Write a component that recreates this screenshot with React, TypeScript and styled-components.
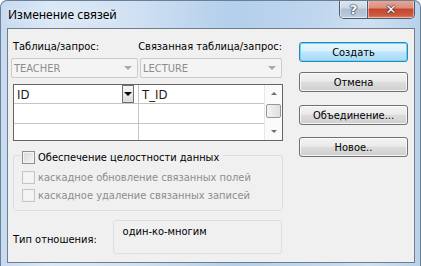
import React from 'react';
import styled, { createGlobalStyle } from 'styled-components';

const GlobalStyle = createGlobalStyle`
  html, body { margin: 0; padding: 0; background: #ffffff; }
  body { font-family: "DejaVu Sans Condensed", "DejaVu Sans", sans-serif; font-size: 11px; }
`;

// Окно в стиле Windows 7 Aero
const Window = styled.div`
  width: 421px;
  height: 266px;
  box-sizing: border-box;
  display: flex;
  flex-direction: column;
  border: 1px solid #6b7f96;
  border-bottom: none;
  border-radius: 7px 7px 0 0;
  background: linear-gradient(90deg, #c6daf0 0%, #dbe8f6 12%, #d2e2f3 30%, #b3cfeb 55%, #bfd6ee 75%, #cfe0f2 88%, #b8d1eb 100%);
  overflow: hidden;
`;

const TitleBar = styled.div`
  height: 27px;
  display: flex;
  justify-content: space-between;
  align-items: flex-start;
  padding-left: 7px;
`;

const TitleText = styled.div`
  font-family: "Noto Sans", "Open Sans", sans-serif;
  font-size: 12px;
  color: #000;
  line-height: 28px;
  text-shadow: 0 0 8px rgba(255, 255, 255, 0.9);
`;

const CaptionButtons = styled.div`
  display: flex;
  margin-right: 5px;
  margin-top: -1px;
  border: 1px solid #4d5b6d;
  border-top: none;
  border-radius: 0 0 5px 5px;
  overflow: hidden;
`;

const CaptionButton = styled.div<{ $close?: boolean }>`
  width: ${p => (p.$close ? 46 : 27)}px;
  height: 18px;
  display: flex;
  align-items: center;
  justify-content: center;
  font-family: "DejaVu Sans", sans-serif;
  font-weight: bold;
  font-size: 13px;
  color: #ffffff;
  text-shadow: 0 0 1px #1c2a3a, 0 0 1px #1c2a3a, 0 0 2px #2a3a4a;
  box-shadow: inset 0 0 0 1px rgba(255, 255, 255, 0.45);
  background: ${p =>
    p.$close
      ? 'linear-gradient(#e9a99b 0%, #dc8d7b 45%, #c7432d 50%, #cc5a3f 85%, #e0876a 100%)'
      : 'linear-gradient(#dfe8f2 0%, #cbd7e5 45%, #aebfd3 50%, #b6c7da 85%, #c8d7e6 100%)'};
  & + & { border-left: 1px solid #4d5b6d; }
`;

const Client = styled.div`
  margin: 0 5px 0 6px;
  height: 235px;
  box-sizing: border-box;
  border: 1px solid #737d89;
  background: #f0f0f0;
  display: flex;
  padding: 0 0 0 3px;
  gap: 17px;
`;

const LeftColumn = styled.div`
  width: 271px;
  display: flex;
  flex-direction: column;
`;

const RightColumn = styled.div`
  display: flex;
  flex-direction: column;
  padding-top: 13px;
`;

const LabelsRow = styled.div`
  display: flex;
  margin-top: 10px;
  height: 14px;
  align-items: center;
`;

const Label = styled.div<{ $w?: number }>`
  width: ${p => (p.$w ? `${p.$w}px` : 'auto')};
  padding-left: 2px;
  box-sizing: border-box;
  color: #000;
  white-space: nowrap;
`;

const ComboRow = styled.div`
  display: flex;
  gap: 2px;
  margin-top: 5px;
`;

const Combo = styled.div<{ $w: number }>`
  width: ${p => p.$w}px;
  height: 20px;
  box-sizing: border-box;
  border: 1px solid #cbcbcb;
  border-radius: 2px;
  background: #f4f4f4;
  display: flex;
  align-items: center;
  justify-content: space-between;
  padding: 0 5px 0 2px;
  color: #8d8d8d;
`;

const Arrow = styled.span<{ $color: string; $size: number; $up?: boolean }>`
  width: 0;
  height: 0;
  border-left: ${p => p.$size}px solid transparent;
  border-right: ${p => p.$size}px solid transparent;
  ${p => (p.$up ? 'border-bottom' : 'border-top')}: ${p => Math.ceil(p.$size * 0.8)}px solid ${p => p.$color};
`;

const Grid = styled.div`
  margin: 6px 0 0 2px;
  width: 270px;
  height: 57px;
  box-sizing: border-box;
  border: 1px solid #646464;
  background: #ffffff;
  display: flex;
`;

const Cells = styled.div`
  flex: 1;
  display: flex;
  flex-direction: column;
`;

const GridRow = styled.div<{ $h: number; $last?: boolean }>`
  height: ${p => p.$h}px;
  display: flex;
  border-bottom: ${p => (p.$last ? 'none' : '1px solid #c4c4c4')};
`;

const Cell = styled.div<{ $w?: number }>`
  ${p => (p.$w ? `width: ${p.$w}px; border-right: 1px solid #c4c4c4;` : 'flex: 1;')}
  box-sizing: border-box;
  display: flex;
  align-items: center;
  justify-content: space-between;
  padding-left: 3px;
  padding-right: 4px;
  font-size: 13px;
  color: #1d1a14;
`;

const DropButton = styled.div`
  width: 12px;
  height: 18px;
  box-sizing: border-box;
  border: 1px solid #707070;
  background: linear-gradient(#f6f6f6, #dcdcdc);
  display: flex;
  align-items: center;
  justify-content: center;
`;

const ScrollBar = styled.div`
  width: 17px;
  background: #fafafa;
  border-left: 1px solid #e6e6e6;
  display: flex;
  flex-direction: column;
  align-items: center;
`;

const ScrollArrow = styled.div`
  height: 17px;
  width: 100%;
  display: flex;
  align-items: center;
  justify-content: center;
`;

const ScrollTrack = styled.div`
  flex: 1;
`;

const Thumb = styled.div`
  width: 15px;
  height: 14px;
  box-sizing: border-box;
  border: 1px solid #979797;
  border-radius: 2px;
  background: linear-gradient(90deg, #f2f2f2, #e0e0e0);
  margin-top: 2px;
`;

const Group = styled.div`
  margin: 14px 0 0 2px;
  width: 270px;
  height: 56px;
  box-sizing: border-box;
  border: 1px solid #d5dfe5;
  border-radius: 3px;
  padding-left: 7px;
  display: flex;
  flex-direction: column;
  align-items: flex-start;
`;

const CheckRow = styled.div<{ $top: number }>`
  display: flex;
  align-items: center;
  gap: 3px;
  height: 13px;
  margin-top: ${p => p.$top}px;
  padding: 0 4px 0 1px;
  background: #f0f0f0;
`;

const CheckBox = styled.span<{ $disabled?: boolean }>`
  width: 13px;
  height: 13px;
  box-sizing: border-box;
  border: 1px solid ${p => (p.$disabled ? '#c6c6c6' : '#8e8f8f')};
  background: ${p => (p.$disabled ? '#f4f4f4' : 'linear-gradient(135deg, #d8d8d8, #f6f6f6)')};
  box-shadow: inset 0 0 0 1px ${p => (p.$disabled ? '#f0f0f0' : '#f4f4f4')};
`;

const CheckText = styled.span<{ $disabled?: boolean }>`
  color: ${p => (p.$disabled ? '#8d8d8d' : '#000')};
  white-space: nowrap;
`;

const RelationRow = styled.div`
  display: flex;
  align-items: center;
  margin: 9px 0 0 2px;
`;

const RelationLabel = styled.div`
  width: 100px;
  padding-top: 4px;
`;

const RelationBox = styled.div`
  width: 170px;
  height: 34px;
  box-sizing: border-box;
  border: 1px solid #d9dfe3;
  border-radius: 3px;
  padding: 4px 0 0 9px;
  line-height: 14px;
`;

const Button = styled.button<{ $default?: boolean; $top: number }>`
  width: 109px;
  height: 20px;
  margin-top: ${p => p.$top}px;
  padding: 0;
  box-sizing: border-box;
  font-family: inherit;
  font-size: 11px;
  color: #000;
  border: 1px solid ${p => (p.$default ? '#3c7fb1' : '#707070')};
  border-radius: 3px;
  background: ${p =>
    p.$default
      ? 'linear-gradient(#eaf6fd 0%, #d9f0fc 45%, #bee6fd 50%, #a7d9f5 100%)'
      : 'linear-gradient(#f2f2f2 0%, #ebebeb 45%, #dddddd 50%, #cfcfcf 100%)'};
  box-shadow: inset 0 0 0 1px ${p => (p.$default ? '#5fdcfb' : 'rgba(255,255,255,0.75)')};
`;

const App: React.FC = () => {
  return (
    <>
      <GlobalStyle />
      <Window>
        <TitleBar>
          <TitleText>Изменение связей</TitleText>
          <CaptionButtons>
            <CaptionButton>?</CaptionButton>
            <CaptionButton $close>✕</CaptionButton>
          </CaptionButtons>
        </TitleBar>
        <Client>
          <LeftColumn>
            <LabelsRow>
              <Label $w={129}>Таблица/запрос:</Label>
              <Label>Связанная таблица/запрос:</Label>
            </LabelsRow>
            <ComboRow>
              <Combo $w={127}>
                TEACHER
                <Arrow $color="#a8a8a8" $size={4} />
              </Combo>
              <Combo $w={142}>
                LECTURE
                <Arrow $color="#a8a8a8" $size={4} />
              </Combo>
            </ComboRow>
            <Grid>
              <Cells>
                <GridRow $h={19}>
                  <Cell $w={125}>
                    ID
                    <DropButton>
                      <Arrow $color="#000" $size={4} />
                    </DropButton>
                  </Cell>
                  <Cell>T_ID</Cell>
                </GridRow>
                <GridRow $h={19}>
                  <Cell $w={125} />
                  <Cell />
                </GridRow>
                <GridRow $h={17} $last>
                  <Cell $w={125} />
                  <Cell />
                </GridRow>
              </Cells>
              <ScrollBar>
                <ScrollArrow>
                  <Arrow $color="#6f6f6f" $size={3} $up />
                </ScrollArrow>
                <Thumb />
                <ScrollTrack />
                <ScrollArrow>
                  <Arrow $color="#6f6f6f" $size={3} />
                </ScrollArrow>
              </ScrollBar>
            </Grid>
            <Group>
              <CheckRow $top={-5}>
                <CheckBox />
                <CheckText>Обеспечение целостности данных</CheckText>
              </CheckRow>
              <CheckRow $top={7}>
                <CheckBox $disabled />
                <CheckText $disabled>каскадное обновление связанных полей</CheckText>
              </CheckRow>
              <CheckRow $top={5}>
                <CheckBox $disabled />
                <CheckText $disabled>каскадное удаление связанных записей</CheckText>
              </CheckRow>
            </Group>
            <RelationRow>
              <RelationLabel>Тип отношения:</RelationLabel>
              <RelationBox>один-ко-многим</RelationBox>
            </RelationRow>
          </LeftColumn>
          <RightColumn>
            <Button $default $top={0}>Создать</Button>
            <Button $top={10}>Отмена</Button>
            <Button $top={13}>Объединение...</Button>
            <Button $top={12}>Новое..</Button>
          </RightColumn>
        </Client>
      </Window>
    </>
  );
};

export default App;
